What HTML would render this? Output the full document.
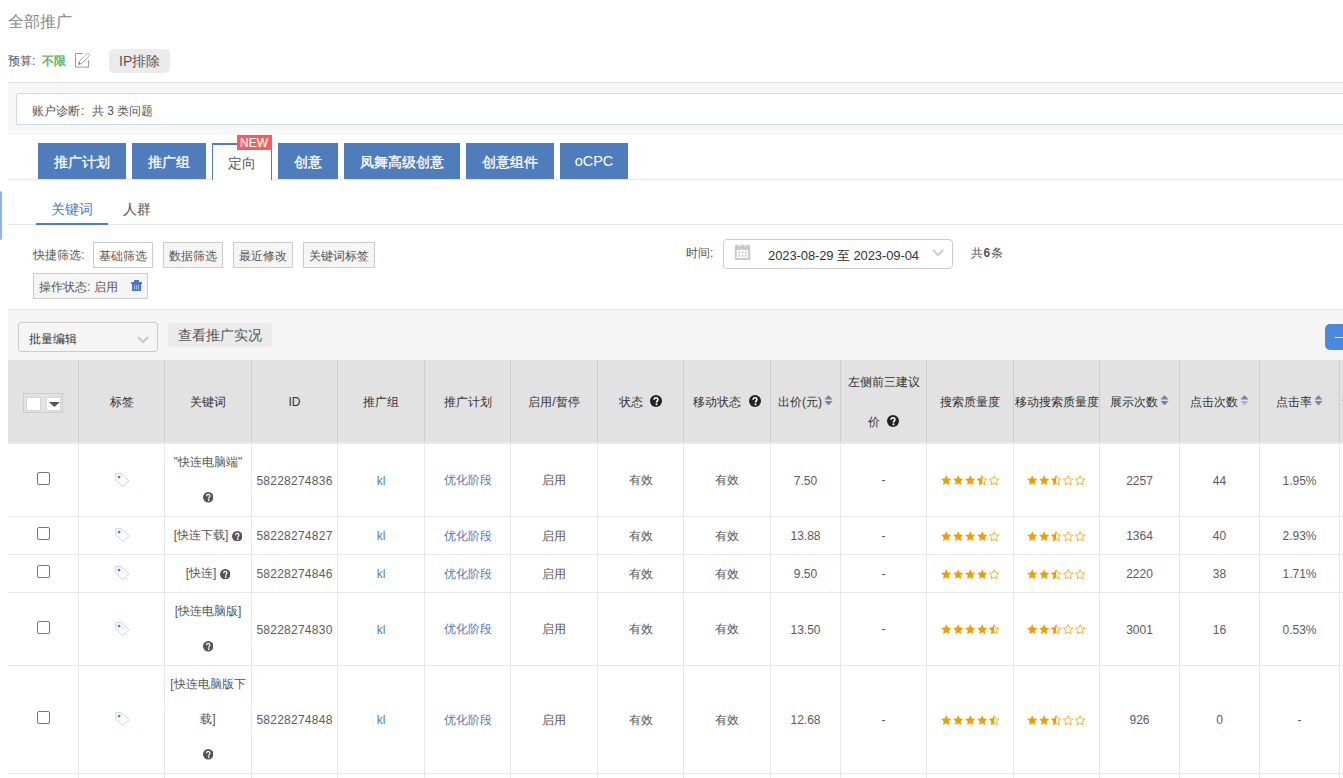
<!DOCTYPE html>
<html><head><meta charset="utf-8"><style>
html,body{margin:0;padding:0;background:#fff;width:1343px;height:778px;overflow:hidden;position:relative;font-family:"Liberation Sans", sans-serif}
.t{position:absolute;white-space:nowrap;line-height:1;}
.r{position:absolute;}
svg{display:inline-block}
</style></head><body>
<div class="t" style="left:8px;top:14px;font-size:16px;color:#888;font-weight:normal;">全部推广</div>
<div class="t" style="left:8px;top:55px;font-size:12px;color:#555;font-weight:normal;">预算:</div>
<div class="t" style="left:42px;top:55px;font-size:12px;color:#4cb050;font-weight:normal;-webkit-text-stroke:0.35px #4cb050">不限</div>
<svg class="r" style="left:74px;top:52px" width="17" height="17" viewBox="0 0 17 17"><path d="M8.7 1.5H1.5V15.1H14.5V8.3" fill="none" stroke="#999" stroke-width="1"/><path d="M4.5 12.5L5.46 9.27L13.66 0.97L15.94 3.23L7.74 11.53Z" fill="none" stroke="#a0a0a0" stroke-width="0.9" stroke-linejoin="round"/><path d="M4.4 12.6L5.1 10.1L6.9 11.9Z" fill="#777"/></svg>
<div class="r" style="left:109px;top:49px;width:61px;height:24px;background:#ebebeb;border-radius:5px"></div>
<div class="t" style="left:119px;top:54px;font-size:14px;color:#555;font-weight:normal;">IP排除</div>
<div class="r" style="left:8px;top:82px;width:1335px;height:1px;background:#dcdcdc"></div>
<div class="r" style="left:8px;top:83px;width:1335px;height:52px;background:#f7f7f7"></div>
<div class="r" style="left:16px;top:93px;width:1340px;height:32px;background:#fff;border:1px solid #c8dcef;border-radius:2px;box-sizing:border-box"></div>
<div class="t" style="left:32px;top:105px;font-size:12px;color:#555;font-weight:normal;">账户诊断<span style="display:inline-block;width:12px;padding-left:1px;box-sizing:border-box">:</span>共 3 类问题</div>
<div class="r" style="left:8px;top:179px;width:1335px;height:1px;background:#e6e6e6"></div>
<div class="r" style="left:38px;top:143px;width:88px;height:36px;background:#4f7cba"></div>
<div class="t" style="left:-118.0px;width:400px;text-align:center;top:155px;font-size:14px;color:#fff;font-weight:normal;-webkit-text-stroke:0.3px #fff">推广计划</div>
<div class="r" style="left:132px;top:143px;width:74px;height:36px;background:#4f7cba"></div>
<div class="t" style="left:-31.0px;width:400px;text-align:center;top:155px;font-size:14px;color:#fff;font-weight:normal;-webkit-text-stroke:0.3px #fff">推广组</div>
<div class="r" style="left:212px;top:143px;width:60px;height:37px;background:#fff;border:1px solid #4f7cba;border-top-width:2px;border-bottom:none;box-sizing:border-box"></div>
<div class="t" style="left:42.0px;width:400px;text-align:center;top:156px;font-size:14px;color:#555;font-weight:normal;">定向</div>
<div class="r" style="left:278px;top:143px;width:60px;height:36px;background:#4f7cba"></div>
<div class="t" style="left:108.0px;width:400px;text-align:center;top:155px;font-size:14px;color:#fff;font-weight:normal;-webkit-text-stroke:0.3px #fff">创意</div>
<div class="r" style="left:344px;top:143px;width:116px;height:36px;background:#4f7cba"></div>
<div class="t" style="left:202.0px;width:400px;text-align:center;top:155px;font-size:14px;color:#fff;font-weight:normal;-webkit-text-stroke:0.3px #fff">凤舞高级创意</div>
<div class="r" style="left:466px;top:143px;width:88px;height:36px;background:#4f7cba"></div>
<div class="t" style="left:310.0px;width:400px;text-align:center;top:155px;font-size:14px;color:#fff;font-weight:normal;-webkit-text-stroke:0.3px #fff">创意组件</div>
<div class="r" style="left:560px;top:143px;width:68px;height:36px;background:#4f7cba"></div>
<div class="t" style="left:394.0px;width:400px;text-align:center;top:154.3px;font-size:14.5px;color:#fff;font-weight:normal;">oCPC</div>
<div class="r" style="left:237px;top:135px;width:35px;height:15px;background:#f65c5c"></div>
<div class="t" style="left:240px;top:137px;font-size:12px;color:#fff;font-weight:normal;-webkit-text-stroke:0.2px #fff">NEW</div>
<div class="r" style="left:0px;top:191px;width:2px;height:49px;background:#8fb4e6;border-radius:0 2px 2px 0"></div>
<div class="r" style="left:8px;top:224px;width:1335px;height:1px;background:#e6e6e6"></div>
<div class="r" style="left:36px;top:223px;width:72px;height:2px;background:#4f7cba"></div>
<div class="t" style="left:51px;top:202px;font-size:14px;color:#4f7cba;font-weight:normal;">关键词</div>
<div class="t" style="left:123px;top:202px;font-size:14px;color:#555;font-weight:normal;">人群</div>
<div class="t" style="left:33px;top:249px;font-size:12px;color:#555;font-weight:normal;">快捷筛选:</div>
<div class="r" style="left:93px;top:242px;width:60px;height:26px;background:#fff;border:1px solid #ccc;box-sizing:border-box"></div>
<div class="t" style="left:-77.0px;width:400px;text-align:center;top:249.5px;font-size:12px;color:#555;font-weight:normal;">基础筛选</div>
<div class="r" style="left:163px;top:242px;width:60px;height:26px;background:#f5f5f5;border:1px solid #ccc;box-sizing:border-box"></div>
<div class="t" style="left:-7.0px;width:400px;text-align:center;top:249.5px;font-size:12px;color:#555;font-weight:normal;">数据筛选</div>
<div class="r" style="left:233px;top:242px;width:60px;height:26px;background:#f5f5f5;border:1px solid #ccc;box-sizing:border-box"></div>
<div class="t" style="left:63.0px;width:400px;text-align:center;top:249.5px;font-size:12px;color:#555;font-weight:normal;">最近修改</div>
<div class="r" style="left:303px;top:242px;width:72px;height:26px;background:#f5f5f5;border:1px solid #ccc;box-sizing:border-box"></div>
<div class="t" style="left:139.0px;width:400px;text-align:center;top:249.5px;font-size:12px;color:#555;font-weight:normal;">关键词标签</div>
<div class="r" style="left:33px;top:273px;width:115px;height:26px;background:#f5f5f5;border:1px solid #ccc;box-sizing:border-box"></div>
<div class="t" style="left:39px;top:280.5px;font-size:12px;color:#555;font-weight:normal;">操作状态: 启用</div>
<svg class="r" style="left:131px;top:279px" width="12" height="12" viewBox="0 0 12 12"><rect x="3" y="1" width="5" height="2" fill="#4a78c2"/><rect x="0.1" y="3" width="10.9" height="2" fill="#4a78c2"/><rect x="1" y="5" width="9.1" height="7" fill="#4a78c2"/><g fill="#a3bde6"><rect x="3" y="6" width="1" height="4.5"/><rect x="5" y="6" width="1" height="4.5"/><rect x="7" y="6" width="1" height="4.5"/></g></svg>
<div class="t" style="left:686px;top:247px;font-size:12px;color:#555;font-weight:normal;">时间:</div>
<div class="r" style="left:723px;top:239px;width:230px;height:30px;background:#fff;border:1px solid #ccc;border-radius:4px;box-sizing:border-box"></div>
<svg class="r" style="left:734px;top:244px" width="17" height="17" viewBox="0 0 17 17"><rect x="0.8" y="0.8" width="15.5" height="15.2" rx="1.6" fill="#cacaca"/><rect x="4.8" y="0.5" width="1.5" height="1.8" fill="#fff"/><rect x="10.8" y="0.5" width="1.5" height="1.8" fill="#fff"/><rect x="2.8" y="6" width="11.3" height="8" fill="#fff"/><g fill="#d6d6d6"><rect x="4" y="7.2" width="2.2" height="2.2"/><rect x="7.4" y="7.2" width="2.2" height="2.2"/><rect x="10.8" y="7.2" width="2.2" height="2.2"/><rect x="4" y="10.6" width="2.2" height="2.2"/><rect x="7.4" y="10.6" width="2.2" height="2.2"/><rect x="10.8" y="10.6" width="2.2" height="2.2"/></g></svg>
<div class="t" style="left:768px;top:248.5px;font-size:13px;color:#333;font-weight:normal;letter-spacing:-0.1px">2023-08-29 至 2023-09-04</div>
<svg class="r" style="left:932px;top:249px" width="12" height="8" viewBox="0 0 12 8"><path d="M1 1L6 6L11 1" fill="none" stroke="#ccc" stroke-width="2"/></svg>
<div class="t" style="left:971px;top:246.5px;font-size:12px;color:#555;font-weight:normal;">共<b style="color:#555;padding:0 1px 0 0.5px">6</b>条</div>
<div class="r" style="left:8px;top:309px;width:1335px;height:51px;background:#f5f5f5;border-top:1px solid #e8e8e8;box-sizing:border-box"></div>
<div class="r" style="left:18px;top:322px;width:140px;height:30px;background:#f5f5f5;border:1px solid #ccc;border-radius:3px;box-sizing:border-box"></div>
<div class="t" style="left:29px;top:333px;font-size:12px;color:#333;font-weight:normal;">批量编辑</div>
<svg class="r" style="left:136.5px;top:335.5px" width="12" height="8" viewBox="0 0 12 8"><path d="M1 1L6 6L11 1" fill="none" stroke="#c8c8c8" stroke-width="2.2"/></svg>
<div class="r" style="left:168px;top:323px;width:104px;height:24px;background:#ebebeb;border-radius:4px"></div>
<div class="t" style="left:178px;top:328px;font-size:14px;color:#555;font-weight:normal;">查看推广实况</div>
<div class="r" style="left:1325px;top:324px;width:40px;height:26px;background:#4a89dc;border-radius:5px"></div>
<div class="r" style="left:1335px;top:336.5px;width:20px;height:1.6px;background:#fff"></div>
<div class="r" style="left:8px;top:360px;width:1335px;height:82px;background:#e2e2e2"></div>
<div class="r" style="left:8px;top:442px;width:1335px;height:2px;background:#e9e9e9"></div>
<div class="r" style="left:78px;top:360px;width:1px;height:82px;background:#ccc"></div>
<div class="r" style="left:78px;top:444px;width:1px;height:334px;background:#e8e8e8"></div>
<div class="r" style="left:164px;top:360px;width:1px;height:82px;background:#ccc"></div>
<div class="r" style="left:164px;top:444px;width:1px;height:334px;background:#e8e8e8"></div>
<div class="r" style="left:251px;top:360px;width:1px;height:82px;background:#ccc"></div>
<div class="r" style="left:251px;top:444px;width:1px;height:334px;background:#e8e8e8"></div>
<div class="r" style="left:337px;top:360px;width:1px;height:82px;background:#ccc"></div>
<div class="r" style="left:337px;top:444px;width:1px;height:334px;background:#e8e8e8"></div>
<div class="r" style="left:424px;top:360px;width:1px;height:82px;background:#ccc"></div>
<div class="r" style="left:424px;top:444px;width:1px;height:334px;background:#e8e8e8"></div>
<div class="r" style="left:510px;top:360px;width:1px;height:82px;background:#ccc"></div>
<div class="r" style="left:510px;top:444px;width:1px;height:334px;background:#e8e8e8"></div>
<div class="r" style="left:597px;top:360px;width:1px;height:82px;background:#ccc"></div>
<div class="r" style="left:597px;top:444px;width:1px;height:334px;background:#e8e8e8"></div>
<div class="r" style="left:683px;top:360px;width:1px;height:82px;background:#ccc"></div>
<div class="r" style="left:683px;top:444px;width:1px;height:334px;background:#e8e8e8"></div>
<div class="r" style="left:770px;top:360px;width:1px;height:82px;background:#ccc"></div>
<div class="r" style="left:770px;top:444px;width:1px;height:334px;background:#e8e8e8"></div>
<div class="r" style="left:840px;top:360px;width:1px;height:82px;background:#ccc"></div>
<div class="r" style="left:840px;top:444px;width:1px;height:334px;background:#e8e8e8"></div>
<div class="r" style="left:926px;top:360px;width:1px;height:82px;background:#ccc"></div>
<div class="r" style="left:926px;top:444px;width:1px;height:334px;background:#e8e8e8"></div>
<div class="r" style="left:1013px;top:360px;width:1px;height:82px;background:#ccc"></div>
<div class="r" style="left:1013px;top:444px;width:1px;height:334px;background:#e8e8e8"></div>
<div class="r" style="left:1099px;top:360px;width:1px;height:82px;background:#ccc"></div>
<div class="r" style="left:1099px;top:444px;width:1px;height:334px;background:#e8e8e8"></div>
<div class="r" style="left:1179px;top:360px;width:1px;height:82px;background:#ccc"></div>
<div class="r" style="left:1179px;top:444px;width:1px;height:334px;background:#e8e8e8"></div>
<div class="r" style="left:1259px;top:360px;width:1px;height:82px;background:#ccc"></div>
<div class="r" style="left:1259px;top:444px;width:1px;height:334px;background:#e8e8e8"></div>
<div class="r" style="left:1339px;top:360px;width:1px;height:82px;background:#ccc"></div>
<div class="r" style="left:1339px;top:444px;width:1px;height:334px;background:#e8e8e8"></div>
<div class="r" style="left:8px;top:516px;width:1335px;height:1px;background:#e8e8e8"></div>
<div class="r" style="left:8px;top:554px;width:1335px;height:1px;background:#e8e8e8"></div>
<div class="r" style="left:8px;top:592px;width:1335px;height:1px;background:#e8e8e8"></div>
<div class="r" style="left:8px;top:665px;width:1335px;height:1px;background:#e8e8e8"></div>
<div class="r" style="left:8px;top:773px;width:1335px;height:1px;background:#e8e8e8"></div>
<div class="r" style="left:23px;top:393px;width:40px;height:20px;border:1px solid #ccc;box-sizing:border-box"></div>
<div class="r" style="left:26px;top:397px;width:15px;height:14px;background:#fff;border:1px solid #d6d6d6;box-sizing:border-box"></div>
<div class="r" style="left:46px;top:397px;width:15px;height:14px;background:#fff;border:1px solid #d6d6d6;box-sizing:border-box"></div>
<svg class="r" style="left:48px;top:402px" width="13" height="5" viewBox="0 0 13 5"><path d="M0.9 0H11.9L6.4 5Z" fill="#555"/></svg>
<div class="t" style="left:-78.5px;width:400px;text-align:center;top:395.6px;font-size:12px;color:#333;font-weight:normal;">标签</div>
<div class="t" style="left:8.0px;width:400px;text-align:center;top:395.6px;font-size:12px;color:#333;font-weight:normal;">关键词</div>
<div class="t" style="left:94.5px;width:400px;text-align:center;top:395.6px;font-size:12px;color:#333;font-weight:normal;">ID</div>
<div class="t" style="left:181.0px;width:400px;text-align:center;top:395.6px;font-size:12px;color:#333;font-weight:normal;">推广组</div>
<div class="t" style="left:267.5px;width:400px;text-align:center;top:395.6px;font-size:12px;color:#333;font-weight:normal;">推广计划</div>
<div class="t" style="left:354.0px;width:400px;text-align:center;top:395.6px;font-size:12px;color:#333;font-weight:normal;">启用/暂停</div>
<div class="t" style="left:440.5px;width:400px;text-align:center;top:395.6px;font-size:12px;color:#333;font-weight:normal;">状态 &nbsp;<svg width="12" height="12" viewBox="0 0 12 12" style="vertical-align:-2.7px;margin-left:1px;position:relative;top:-1px"><circle cx="6" cy="6" r="6" fill="#222"/><path d="M4.1 4.8C4.1 3.5 5 2.7 6 2.7C7.1 2.7 7.9 3.5 7.9 4.5C7.9 5.8 6.5 6 6.5 7.6" fill="none" stroke="#fff" stroke-width="1.6"/><rect x="5.6" y="8.4" width="1.8" height="1.8" fill="#fff"/></svg></div>
<div class="t" style="left:527.0px;width:400px;text-align:center;top:395.6px;font-size:12px;color:#333;font-weight:normal;">移动状态 &nbsp;<svg width="12" height="12" viewBox="0 0 12 12" style="vertical-align:-2.7px;margin-left:1px;position:relative;top:-1px"><circle cx="6" cy="6" r="6" fill="#222"/><path d="M4.1 4.8C4.1 3.5 5 2.7 6 2.7C7.1 2.7 7.9 3.5 7.9 4.5C7.9 5.8 6.5 6 6.5 7.6" fill="none" stroke="#fff" stroke-width="1.6"/><rect x="5.6" y="8.4" width="1.8" height="1.8" fill="#fff"/></svg></div>
<div class="t" style="left:605.5px;width:400px;text-align:center;top:395.6px;font-size:12px;color:#333;font-weight:normal;">出价(元)<svg width="9" height="11" viewBox="0 0 9 11" style="vertical-align:-2px;margin-left:2px;position:relative;top:-2px"><path d="M0.5 4.5L4.5 0L8.5 4.5Z" fill="#6f87a8"/><path d="M0.5 6L4.5 10.5L8.5 6Z" fill="#6f87a8"/></svg></div>
<div class="t" style="left:770.0px;width:400px;text-align:center;top:395.6px;font-size:12px;color:#333;font-weight:normal;">搜索质量度</div>
<div class="t" style="left:856.5px;width:400px;text-align:center;top:395.6px;font-size:12px;color:#333;font-weight:normal;">移动搜索质量度</div>
<div class="t" style="left:939.5px;width:400px;text-align:center;top:395.6px;font-size:12px;color:#333;font-weight:normal;">展示次数<svg width="9" height="11" viewBox="0 0 9 11" style="vertical-align:-2px;margin-left:2px;position:relative;top:-2px"><path d="M0.5 4.5L4.5 0L8.5 4.5Z" fill="#6f87a8"/><path d="M0.5 6L4.5 10.5L8.5 6Z" fill="#6f87a8"/></svg></div>
<div class="t" style="left:1019.5px;width:400px;text-align:center;top:395.6px;font-size:12px;color:#333;font-weight:normal;">点击次数<svg width="9" height="11" viewBox="0 0 9 11" style="vertical-align:-2px;margin-left:2px;position:relative;top:-2px"><path d="M0.5 4.5L4.5 0L8.5 4.5Z" fill="#6f87a8"/><path d="M0.5 6L4.5 10.5L8.5 6Z" fill="#a9b7ca"/></svg></div>
<div class="t" style="left:1099.5px;width:400px;text-align:center;top:395.6px;font-size:12px;color:#333;font-weight:normal;">点击率<svg width="9" height="11" viewBox="0 0 9 11" style="vertical-align:-2px;margin-left:2px;position:relative;top:-2px"><path d="M0.5 4.5L4.5 0L8.5 4.5Z" fill="#6f87a8"/><path d="M0.5 6L4.5 10.5L8.5 6Z" fill="#6f87a8"/></svg></div>
<div class="t" style="left:683.5px;width:400px;text-align:center;top:375.6px;font-size:12px;color:#333;font-weight:normal;">左侧前三建议</div>
<div class="t" style="left:683.5px;width:400px;text-align:center;top:415.6px;font-size:12px;color:#333;font-weight:normal;">价 &nbsp;<svg width="12" height="12" viewBox="0 0 12 12" style="vertical-align:-2.7px;margin-left:1px;position:relative;top:-1px"><circle cx="6" cy="6" r="6" fill="#222"/><path d="M4.1 4.8C4.1 3.5 5 2.7 6 2.7C7.1 2.7 7.9 3.5 7.9 4.5C7.9 5.8 6.5 6 6.5 7.6" fill="none" stroke="#fff" stroke-width="1.6"/><rect x="5.6" y="8.4" width="1.8" height="1.8" fill="#fff"/></svg></div>
<div class="t" style="left:1342px;top:395px;font-size:12px;color:#333;font-weight:normal;">千</div>
<div class="r" style="left:37px;top:471.5px;width:13px;height:13px;border:1px solid #767676;border-radius:2px;box-sizing:border-box;background:#fff"></div>
<div class="r" style="left:115.0px;top:472.5px;width:15px;height:15px"><svg width="15" height="15" viewBox="0 0 15 15"><path d="M0.7 0.7H6.8L13.9 7.8L7.8 13.9L0.7 6.8Z" fill="none" stroke="#b8d4fc" stroke-width="1"/><circle cx="4.1" cy="4.1" r="1.4" fill="#4a7cc4"/></svg></div>
<div class="t" style="left:8.0px;width:400px;text-align:center;top:455.5px;font-size:12px;color:#555;font-weight:normal;">"快连电脑端"</div>
<div class="t" style="left:8.0px;width:400px;text-align:center;top:491.5px;font-size:12px;color:#555;font-weight:normal;"><svg width="10.5" height="10.5" viewBox="0 0 12 12" style="vertical-align:-1px;margin-left:0px;position:relative;top:0px"><circle cx="6" cy="6" r="6" fill="#555"/><path d="M4.1 4.8C4.1 3.5 5 2.7 6 2.7C7.1 2.7 7.9 3.5 7.9 4.5C7.9 5.8 6.5 6 6.5 7.6" fill="none" stroke="#fff" stroke-width="1.4"/><rect x="5.6" y="8.4" width="1.8" height="1.8" fill="#fff"/></svg></div>
<div class="t" style="left:94.5px;width:400px;text-align:center;top:475px;font-size:12px;color:#5c5c5c;font-weight:normal;letter-spacing:0.25px">58228274836</div>
<div class="t" style="left:181.0px;width:400px;text-align:center;top:475px;font-size:12px;color:#4f7cba;font-weight:normal;">kl</div>
<div class="t" style="left:267.5px;width:400px;text-align:center;top:474.0px;font-size:12px;color:#4f7cba;font-weight:normal;">优化阶段</div>
<div class="t" style="left:354.0px;width:400px;text-align:center;top:474.0px;font-size:12px;color:#555;font-weight:normal;">启用</div>
<div class="t" style="left:440.5px;width:400px;text-align:center;top:474.0px;font-size:12px;color:#555;font-weight:normal;">有效</div>
<div class="t" style="left:527.0px;width:400px;text-align:center;top:474.0px;font-size:12px;color:#555;font-weight:normal;">有效</div>
<div class="t" style="left:605.5px;width:400px;text-align:center;top:475px;font-size:12px;color:#5c5c5c;font-weight:normal;">7.50</div>
<div class="t" style="left:683.5px;width:400px;text-align:center;top:474.0px;font-size:12px;color:#555;font-weight:normal;">-</div>
<div class="r" style="left:941px;top:475.0px;width:58px;height:11px;line-height:0"><svg width="58" height="11" viewBox="0 0 58 11" style="overflow:visible"><g transform="translate(0.2,0.3)"><path d="M5.00 0.05L6.50 3.29L10.04 3.71L7.43 6.14L8.12 9.64L5.00 7.90L1.88 9.64L2.57 6.14L-0.04 3.71L3.50 3.29Z" fill="#ef9d00"/></g><g transform="translate(12.2,0.3)"><path d="M5.00 0.05L6.50 3.29L10.04 3.71L7.43 6.14L8.12 9.64L5.00 7.90L1.88 9.64L2.57 6.14L-0.04 3.71L3.50 3.29Z" fill="#ef9d00"/></g><g transform="translate(24.2,0.3)"><path d="M5.00 0.05L6.50 3.29L10.04 3.71L7.43 6.14L8.12 9.64L5.00 7.90L1.88 9.64L2.57 6.14L-0.04 3.71L3.50 3.29Z" fill="#ef9d00"/></g><g transform="translate(36.2,0.3)"><path d="M5.00 0.40L6.44 3.47L9.80 3.89L7.33 6.21L7.97 9.54L5.00 7.90L2.03 9.54L2.67 6.21L0.20 3.89L3.56 3.47Z" fill="none" stroke="#ef9d00" stroke-width="0.8"/><clipPath id="hc"><rect x="0" y="0" width="5" height="11"/></clipPath><path d="M5.00 0.05L6.50 3.29L10.04 3.71L7.43 6.14L8.12 9.64L5.00 7.90L1.88 9.64L2.57 6.14L-0.04 3.71L3.50 3.29Z" fill="#ef9d00" clip-path="url(#hc)"/></g><g transform="translate(48.2,0.3)"><path d="M5.00 0.40L6.44 3.47L9.80 3.89L7.33 6.21L7.97 9.54L5.00 7.90L2.03 9.54L2.67 6.21L0.20 3.89L3.56 3.47Z" fill="none" stroke="#ef9d00" stroke-width="0.8" stroke-linejoin="miter"/></g></svg></div>
<div class="r" style="left:1027px;top:475.0px;width:58px;height:11px;line-height:0"><svg width="58" height="11" viewBox="0 0 58 11" style="overflow:visible"><g transform="translate(0.2,0.3)"><path d="M5.00 0.05L6.50 3.29L10.04 3.71L7.43 6.14L8.12 9.64L5.00 7.90L1.88 9.64L2.57 6.14L-0.04 3.71L3.50 3.29Z" fill="#ef9d00"/></g><g transform="translate(12.2,0.3)"><path d="M5.00 0.05L6.50 3.29L10.04 3.71L7.43 6.14L8.12 9.64L5.00 7.90L1.88 9.64L2.57 6.14L-0.04 3.71L3.50 3.29Z" fill="#ef9d00"/></g><g transform="translate(24.2,0.3)"><path d="M5.00 0.40L6.44 3.47L9.80 3.89L7.33 6.21L7.97 9.54L5.00 7.90L2.03 9.54L2.67 6.21L0.20 3.89L3.56 3.47Z" fill="none" stroke="#ef9d00" stroke-width="0.8"/><clipPath id="hc"><rect x="0" y="0" width="5" height="11"/></clipPath><path d="M5.00 0.05L6.50 3.29L10.04 3.71L7.43 6.14L8.12 9.64L5.00 7.90L1.88 9.64L2.57 6.14L-0.04 3.71L3.50 3.29Z" fill="#ef9d00" clip-path="url(#hc)"/></g><g transform="translate(36.2,0.3)"><path d="M5.00 0.40L6.44 3.47L9.80 3.89L7.33 6.21L7.97 9.54L5.00 7.90L2.03 9.54L2.67 6.21L0.20 3.89L3.56 3.47Z" fill="none" stroke="#ef9d00" stroke-width="0.8" stroke-linejoin="miter"/></g><g transform="translate(48.2,0.3)"><path d="M5.00 0.40L6.44 3.47L9.80 3.89L7.33 6.21L7.97 9.54L5.00 7.90L2.03 9.54L2.67 6.21L0.20 3.89L3.56 3.47Z" fill="none" stroke="#ef9d00" stroke-width="0.8" stroke-linejoin="miter"/></g></svg></div>
<div class="t" style="left:939.5px;width:400px;text-align:center;top:475px;font-size:12px;color:#5c5c5c;font-weight:normal;">2257</div>
<div class="t" style="left:1019.5px;width:400px;text-align:center;top:475px;font-size:12px;color:#5c5c5c;font-weight:normal;">44</div>
<div class="t" style="left:1099.5px;width:400px;text-align:center;top:475px;font-size:12px;color:#5c5c5c;font-weight:normal;">1.95%</div>
<div class="r" style="left:37px;top:527.0px;width:13px;height:13px;border:1px solid #767676;border-radius:2px;box-sizing:border-box;background:#fff"></div>
<div class="r" style="left:115.0px;top:528.0px;width:15px;height:15px"><svg width="15" height="15" viewBox="0 0 15 15"><path d="M0.7 0.7H6.8L13.9 7.8L7.8 13.9L0.7 6.8Z" fill="none" stroke="#b8d4fc" stroke-width="1"/><circle cx="4.1" cy="4.1" r="1.4" fill="#4a7cc4"/></svg></div>
<div class="t" style="left:8.0px;width:400px;text-align:center;top:528.5px;font-size:12px;color:#555;font-weight:normal;">[快连下载] <svg width="10.5" height="10.5" viewBox="0 0 12 12" style="vertical-align:-2.6px;margin-left:0px;position:relative;top:0px"><circle cx="6" cy="6" r="6" fill="#555"/><path d="M4.1 4.8C4.1 3.5 5 2.7 6 2.7C7.1 2.7 7.9 3.5 7.9 4.5C7.9 5.8 6.5 6 6.5 7.6" fill="none" stroke="#fff" stroke-width="1.4"/><rect x="5.6" y="8.4" width="1.8" height="1.8" fill="#fff"/></svg></div>
<div class="t" style="left:94.5px;width:400px;text-align:center;top:530px;font-size:12px;color:#5c5c5c;font-weight:normal;letter-spacing:0.25px">58228274827</div>
<div class="t" style="left:181.0px;width:400px;text-align:center;top:530px;font-size:12px;color:#4f7cba;font-weight:normal;">kl</div>
<div class="t" style="left:267.5px;width:400px;text-align:center;top:529.5px;font-size:12px;color:#4f7cba;font-weight:normal;">优化阶段</div>
<div class="t" style="left:354.0px;width:400px;text-align:center;top:529.5px;font-size:12px;color:#555;font-weight:normal;">启用</div>
<div class="t" style="left:440.5px;width:400px;text-align:center;top:529.5px;font-size:12px;color:#555;font-weight:normal;">有效</div>
<div class="t" style="left:527.0px;width:400px;text-align:center;top:529.5px;font-size:12px;color:#555;font-weight:normal;">有效</div>
<div class="t" style="left:605.5px;width:400px;text-align:center;top:530px;font-size:12px;color:#5c5c5c;font-weight:normal;">13.88</div>
<div class="t" style="left:683.5px;width:400px;text-align:center;top:529.5px;font-size:12px;color:#555;font-weight:normal;">-</div>
<div class="r" style="left:941px;top:530.5px;width:58px;height:11px;line-height:0"><svg width="58" height="11" viewBox="0 0 58 11" style="overflow:visible"><g transform="translate(0.2,0.3)"><path d="M5.00 0.05L6.50 3.29L10.04 3.71L7.43 6.14L8.12 9.64L5.00 7.90L1.88 9.64L2.57 6.14L-0.04 3.71L3.50 3.29Z" fill="#ef9d00"/></g><g transform="translate(12.2,0.3)"><path d="M5.00 0.05L6.50 3.29L10.04 3.71L7.43 6.14L8.12 9.64L5.00 7.90L1.88 9.64L2.57 6.14L-0.04 3.71L3.50 3.29Z" fill="#ef9d00"/></g><g transform="translate(24.2,0.3)"><path d="M5.00 0.05L6.50 3.29L10.04 3.71L7.43 6.14L8.12 9.64L5.00 7.90L1.88 9.64L2.57 6.14L-0.04 3.71L3.50 3.29Z" fill="#ef9d00"/></g><g transform="translate(36.2,0.3)"><path d="M5.00 0.05L6.50 3.29L10.04 3.71L7.43 6.14L8.12 9.64L5.00 7.90L1.88 9.64L2.57 6.14L-0.04 3.71L3.50 3.29Z" fill="#ef9d00"/></g><g transform="translate(48.2,0.3)"><path d="M5.00 0.40L6.44 3.47L9.80 3.89L7.33 6.21L7.97 9.54L5.00 7.90L2.03 9.54L2.67 6.21L0.20 3.89L3.56 3.47Z" fill="none" stroke="#ef9d00" stroke-width="0.8" stroke-linejoin="miter"/></g></svg></div>
<div class="r" style="left:1027px;top:530.5px;width:58px;height:11px;line-height:0"><svg width="58" height="11" viewBox="0 0 58 11" style="overflow:visible"><g transform="translate(0.2,0.3)"><path d="M5.00 0.05L6.50 3.29L10.04 3.71L7.43 6.14L8.12 9.64L5.00 7.90L1.88 9.64L2.57 6.14L-0.04 3.71L3.50 3.29Z" fill="#ef9d00"/></g><g transform="translate(12.2,0.3)"><path d="M5.00 0.05L6.50 3.29L10.04 3.71L7.43 6.14L8.12 9.64L5.00 7.90L1.88 9.64L2.57 6.14L-0.04 3.71L3.50 3.29Z" fill="#ef9d00"/></g><g transform="translate(24.2,0.3)"><path d="M5.00 0.40L6.44 3.47L9.80 3.89L7.33 6.21L7.97 9.54L5.00 7.90L2.03 9.54L2.67 6.21L0.20 3.89L3.56 3.47Z" fill="none" stroke="#ef9d00" stroke-width="0.8"/><clipPath id="hc"><rect x="0" y="0" width="5" height="11"/></clipPath><path d="M5.00 0.05L6.50 3.29L10.04 3.71L7.43 6.14L8.12 9.64L5.00 7.90L1.88 9.64L2.57 6.14L-0.04 3.71L3.50 3.29Z" fill="#ef9d00" clip-path="url(#hc)"/></g><g transform="translate(36.2,0.3)"><path d="M5.00 0.40L6.44 3.47L9.80 3.89L7.33 6.21L7.97 9.54L5.00 7.90L2.03 9.54L2.67 6.21L0.20 3.89L3.56 3.47Z" fill="none" stroke="#ef9d00" stroke-width="0.8" stroke-linejoin="miter"/></g><g transform="translate(48.2,0.3)"><path d="M5.00 0.40L6.44 3.47L9.80 3.89L7.33 6.21L7.97 9.54L5.00 7.90L2.03 9.54L2.67 6.21L0.20 3.89L3.56 3.47Z" fill="none" stroke="#ef9d00" stroke-width="0.8" stroke-linejoin="miter"/></g></svg></div>
<div class="t" style="left:939.5px;width:400px;text-align:center;top:530px;font-size:12px;color:#5c5c5c;font-weight:normal;">1364</div>
<div class="t" style="left:1019.5px;width:400px;text-align:center;top:530px;font-size:12px;color:#5c5c5c;font-weight:normal;">40</div>
<div class="t" style="left:1099.5px;width:400px;text-align:center;top:530px;font-size:12px;color:#5c5c5c;font-weight:normal;">2.93%</div>
<div class="r" style="left:37px;top:565.0px;width:13px;height:13px;border:1px solid #767676;border-radius:2px;box-sizing:border-box;background:#fff"></div>
<div class="r" style="left:115.0px;top:566.0px;width:15px;height:15px"><svg width="15" height="15" viewBox="0 0 15 15"><path d="M0.7 0.7H6.8L13.9 7.8L7.8 13.9L0.7 6.8Z" fill="none" stroke="#b8d4fc" stroke-width="1"/><circle cx="4.1" cy="4.1" r="1.4" fill="#4a7cc4"/></svg></div>
<div class="t" style="left:8.0px;width:400px;text-align:center;top:566.5px;font-size:12px;color:#555;font-weight:normal;">[快连] <svg width="10.5" height="10.5" viewBox="0 0 12 12" style="vertical-align:-2.6px;margin-left:0px;position:relative;top:0px"><circle cx="6" cy="6" r="6" fill="#555"/><path d="M4.1 4.8C4.1 3.5 5 2.7 6 2.7C7.1 2.7 7.9 3.5 7.9 4.5C7.9 5.8 6.5 6 6.5 7.6" fill="none" stroke="#fff" stroke-width="1.4"/><rect x="5.6" y="8.4" width="1.8" height="1.8" fill="#fff"/></svg></div>
<div class="t" style="left:94.5px;width:400px;text-align:center;top:568px;font-size:12px;color:#5c5c5c;font-weight:normal;letter-spacing:0.25px">58228274846</div>
<div class="t" style="left:181.0px;width:400px;text-align:center;top:568px;font-size:12px;color:#4f7cba;font-weight:normal;">kl</div>
<div class="t" style="left:267.5px;width:400px;text-align:center;top:567.5px;font-size:12px;color:#4f7cba;font-weight:normal;">优化阶段</div>
<div class="t" style="left:354.0px;width:400px;text-align:center;top:567.5px;font-size:12px;color:#555;font-weight:normal;">启用</div>
<div class="t" style="left:440.5px;width:400px;text-align:center;top:567.5px;font-size:12px;color:#555;font-weight:normal;">有效</div>
<div class="t" style="left:527.0px;width:400px;text-align:center;top:567.5px;font-size:12px;color:#555;font-weight:normal;">有效</div>
<div class="t" style="left:605.5px;width:400px;text-align:center;top:568px;font-size:12px;color:#5c5c5c;font-weight:normal;">9.50</div>
<div class="t" style="left:683.5px;width:400px;text-align:center;top:567.5px;font-size:12px;color:#555;font-weight:normal;">-</div>
<div class="r" style="left:941px;top:568.5px;width:58px;height:11px;line-height:0"><svg width="58" height="11" viewBox="0 0 58 11" style="overflow:visible"><g transform="translate(0.2,0.3)"><path d="M5.00 0.05L6.50 3.29L10.04 3.71L7.43 6.14L8.12 9.64L5.00 7.90L1.88 9.64L2.57 6.14L-0.04 3.71L3.50 3.29Z" fill="#ef9d00"/></g><g transform="translate(12.2,0.3)"><path d="M5.00 0.05L6.50 3.29L10.04 3.71L7.43 6.14L8.12 9.64L5.00 7.90L1.88 9.64L2.57 6.14L-0.04 3.71L3.50 3.29Z" fill="#ef9d00"/></g><g transform="translate(24.2,0.3)"><path d="M5.00 0.05L6.50 3.29L10.04 3.71L7.43 6.14L8.12 9.64L5.00 7.90L1.88 9.64L2.57 6.14L-0.04 3.71L3.50 3.29Z" fill="#ef9d00"/></g><g transform="translate(36.2,0.3)"><path d="M5.00 0.05L6.50 3.29L10.04 3.71L7.43 6.14L8.12 9.64L5.00 7.90L1.88 9.64L2.57 6.14L-0.04 3.71L3.50 3.29Z" fill="#ef9d00"/></g><g transform="translate(48.2,0.3)"><path d="M5.00 0.40L6.44 3.47L9.80 3.89L7.33 6.21L7.97 9.54L5.00 7.90L2.03 9.54L2.67 6.21L0.20 3.89L3.56 3.47Z" fill="none" stroke="#ef9d00" stroke-width="0.8" stroke-linejoin="miter"/></g></svg></div>
<div class="r" style="left:1027px;top:568.5px;width:58px;height:11px;line-height:0"><svg width="58" height="11" viewBox="0 0 58 11" style="overflow:visible"><g transform="translate(0.2,0.3)"><path d="M5.00 0.05L6.50 3.29L10.04 3.71L7.43 6.14L8.12 9.64L5.00 7.90L1.88 9.64L2.57 6.14L-0.04 3.71L3.50 3.29Z" fill="#ef9d00"/></g><g transform="translate(12.2,0.3)"><path d="M5.00 0.05L6.50 3.29L10.04 3.71L7.43 6.14L8.12 9.64L5.00 7.90L1.88 9.64L2.57 6.14L-0.04 3.71L3.50 3.29Z" fill="#ef9d00"/></g><g transform="translate(24.2,0.3)"><path d="M5.00 0.40L6.44 3.47L9.80 3.89L7.33 6.21L7.97 9.54L5.00 7.90L2.03 9.54L2.67 6.21L0.20 3.89L3.56 3.47Z" fill="none" stroke="#ef9d00" stroke-width="0.8"/><clipPath id="hc"><rect x="0" y="0" width="5" height="11"/></clipPath><path d="M5.00 0.05L6.50 3.29L10.04 3.71L7.43 6.14L8.12 9.64L5.00 7.90L1.88 9.64L2.57 6.14L-0.04 3.71L3.50 3.29Z" fill="#ef9d00" clip-path="url(#hc)"/></g><g transform="translate(36.2,0.3)"><path d="M5.00 0.40L6.44 3.47L9.80 3.89L7.33 6.21L7.97 9.54L5.00 7.90L2.03 9.54L2.67 6.21L0.20 3.89L3.56 3.47Z" fill="none" stroke="#ef9d00" stroke-width="0.8" stroke-linejoin="miter"/></g><g transform="translate(48.2,0.3)"><path d="M5.00 0.40L6.44 3.47L9.80 3.89L7.33 6.21L7.97 9.54L5.00 7.90L2.03 9.54L2.67 6.21L0.20 3.89L3.56 3.47Z" fill="none" stroke="#ef9d00" stroke-width="0.8" stroke-linejoin="miter"/></g></svg></div>
<div class="t" style="left:939.5px;width:400px;text-align:center;top:568px;font-size:12px;color:#5c5c5c;font-weight:normal;">2220</div>
<div class="t" style="left:1019.5px;width:400px;text-align:center;top:568px;font-size:12px;color:#5c5c5c;font-weight:normal;">38</div>
<div class="t" style="left:1099.5px;width:400px;text-align:center;top:568px;font-size:12px;color:#5c5c5c;font-weight:normal;">1.71%</div>
<div class="r" style="left:37px;top:620.5px;width:13px;height:13px;border:1px solid #767676;border-radius:2px;box-sizing:border-box;background:#fff"></div>
<div class="r" style="left:115.0px;top:621.5px;width:15px;height:15px"><svg width="15" height="15" viewBox="0 0 15 15"><path d="M0.7 0.7H6.8L13.9 7.8L7.8 13.9L0.7 6.8Z" fill="none" stroke="#b8d4fc" stroke-width="1"/><circle cx="4.1" cy="4.1" r="1.4" fill="#4a7cc4"/></svg></div>
<div class="t" style="left:8.0px;width:400px;text-align:center;top:604.5px;font-size:12px;color:#555;font-weight:normal;">[快连电脑版]</div>
<div class="t" style="left:8.0px;width:400px;text-align:center;top:640.5px;font-size:12px;color:#555;font-weight:normal;"><svg width="10.5" height="10.5" viewBox="0 0 12 12" style="vertical-align:-1px;margin-left:0px;position:relative;top:0px"><circle cx="6" cy="6" r="6" fill="#555"/><path d="M4.1 4.8C4.1 3.5 5 2.7 6 2.7C7.1 2.7 7.9 3.5 7.9 4.5C7.9 5.8 6.5 6 6.5 7.6" fill="none" stroke="#fff" stroke-width="1.4"/><rect x="5.6" y="8.4" width="1.8" height="1.8" fill="#fff"/></svg></div>
<div class="t" style="left:94.5px;width:400px;text-align:center;top:624px;font-size:12px;color:#5c5c5c;font-weight:normal;letter-spacing:0.25px">58228274830</div>
<div class="t" style="left:181.0px;width:400px;text-align:center;top:624px;font-size:12px;color:#4f7cba;font-weight:normal;">kl</div>
<div class="t" style="left:267.5px;width:400px;text-align:center;top:623.0px;font-size:12px;color:#4f7cba;font-weight:normal;">优化阶段</div>
<div class="t" style="left:354.0px;width:400px;text-align:center;top:623.0px;font-size:12px;color:#555;font-weight:normal;">启用</div>
<div class="t" style="left:440.5px;width:400px;text-align:center;top:623.0px;font-size:12px;color:#555;font-weight:normal;">有效</div>
<div class="t" style="left:527.0px;width:400px;text-align:center;top:623.0px;font-size:12px;color:#555;font-weight:normal;">有效</div>
<div class="t" style="left:605.5px;width:400px;text-align:center;top:624px;font-size:12px;color:#5c5c5c;font-weight:normal;">13.50</div>
<div class="t" style="left:683.5px;width:400px;text-align:center;top:623.0px;font-size:12px;color:#555;font-weight:normal;">-</div>
<div class="r" style="left:941px;top:624.0px;width:58px;height:11px;line-height:0"><svg width="58" height="11" viewBox="0 0 58 11" style="overflow:visible"><g transform="translate(0.2,0.3)"><path d="M5.00 0.05L6.50 3.29L10.04 3.71L7.43 6.14L8.12 9.64L5.00 7.90L1.88 9.64L2.57 6.14L-0.04 3.71L3.50 3.29Z" fill="#ef9d00"/></g><g transform="translate(12.2,0.3)"><path d="M5.00 0.05L6.50 3.29L10.04 3.71L7.43 6.14L8.12 9.64L5.00 7.90L1.88 9.64L2.57 6.14L-0.04 3.71L3.50 3.29Z" fill="#ef9d00"/></g><g transform="translate(24.2,0.3)"><path d="M5.00 0.05L6.50 3.29L10.04 3.71L7.43 6.14L8.12 9.64L5.00 7.90L1.88 9.64L2.57 6.14L-0.04 3.71L3.50 3.29Z" fill="#ef9d00"/></g><g transform="translate(36.2,0.3)"><path d="M5.00 0.05L6.50 3.29L10.04 3.71L7.43 6.14L8.12 9.64L5.00 7.90L1.88 9.64L2.57 6.14L-0.04 3.71L3.50 3.29Z" fill="#ef9d00"/></g><g transform="translate(48.2,0.3)"><path d="M5.00 0.40L6.44 3.47L9.80 3.89L7.33 6.21L7.97 9.54L5.00 7.90L2.03 9.54L2.67 6.21L0.20 3.89L3.56 3.47Z" fill="none" stroke="#ef9d00" stroke-width="0.8"/><clipPath id="hc"><rect x="0" y="0" width="5" height="11"/></clipPath><path d="M5.00 0.05L6.50 3.29L10.04 3.71L7.43 6.14L8.12 9.64L5.00 7.90L1.88 9.64L2.57 6.14L-0.04 3.71L3.50 3.29Z" fill="#ef9d00" clip-path="url(#hc)"/></g></svg></div>
<div class="r" style="left:1027px;top:624.0px;width:58px;height:11px;line-height:0"><svg width="58" height="11" viewBox="0 0 58 11" style="overflow:visible"><g transform="translate(0.2,0.3)"><path d="M5.00 0.05L6.50 3.29L10.04 3.71L7.43 6.14L8.12 9.64L5.00 7.90L1.88 9.64L2.57 6.14L-0.04 3.71L3.50 3.29Z" fill="#ef9d00"/></g><g transform="translate(12.2,0.3)"><path d="M5.00 0.05L6.50 3.29L10.04 3.71L7.43 6.14L8.12 9.64L5.00 7.90L1.88 9.64L2.57 6.14L-0.04 3.71L3.50 3.29Z" fill="#ef9d00"/></g><g transform="translate(24.2,0.3)"><path d="M5.00 0.40L6.44 3.47L9.80 3.89L7.33 6.21L7.97 9.54L5.00 7.90L2.03 9.54L2.67 6.21L0.20 3.89L3.56 3.47Z" fill="none" stroke="#ef9d00" stroke-width="0.8"/><clipPath id="hc"><rect x="0" y="0" width="5" height="11"/></clipPath><path d="M5.00 0.05L6.50 3.29L10.04 3.71L7.43 6.14L8.12 9.64L5.00 7.90L1.88 9.64L2.57 6.14L-0.04 3.71L3.50 3.29Z" fill="#ef9d00" clip-path="url(#hc)"/></g><g transform="translate(36.2,0.3)"><path d="M5.00 0.40L6.44 3.47L9.80 3.89L7.33 6.21L7.97 9.54L5.00 7.90L2.03 9.54L2.67 6.21L0.20 3.89L3.56 3.47Z" fill="none" stroke="#ef9d00" stroke-width="0.8" stroke-linejoin="miter"/></g><g transform="translate(48.2,0.3)"><path d="M5.00 0.40L6.44 3.47L9.80 3.89L7.33 6.21L7.97 9.54L5.00 7.90L2.03 9.54L2.67 6.21L0.20 3.89L3.56 3.47Z" fill="none" stroke="#ef9d00" stroke-width="0.8" stroke-linejoin="miter"/></g></svg></div>
<div class="t" style="left:939.5px;width:400px;text-align:center;top:624px;font-size:12px;color:#5c5c5c;font-weight:normal;">3001</div>
<div class="t" style="left:1019.5px;width:400px;text-align:center;top:624px;font-size:12px;color:#5c5c5c;font-weight:normal;">16</div>
<div class="t" style="left:1099.5px;width:400px;text-align:center;top:624px;font-size:12px;color:#5c5c5c;font-weight:normal;">0.53%</div>
<div class="r" style="left:37px;top:711.0px;width:13px;height:13px;border:1px solid #767676;border-radius:2px;box-sizing:border-box;background:#fff"></div>
<div class="r" style="left:115.0px;top:712.0px;width:15px;height:15px"><svg width="15" height="15" viewBox="0 0 15 15"><path d="M0.7 0.7H6.8L13.9 7.8L7.8 13.9L0.7 6.8Z" fill="none" stroke="#b8d4fc" stroke-width="1"/><circle cx="4.1" cy="4.1" r="1.4" fill="#4a7cc4"/></svg></div>
<div class="t" style="left:8.0px;width:400px;text-align:center;top:677.5px;font-size:12px;color:#555;font-weight:normal;">[快连电脑版下</div>
<div class="t" style="left:8.0px;width:400px;text-align:center;top:712.5px;font-size:12px;color:#555;font-weight:normal;">载]</div>
<div class="t" style="left:8.0px;width:400px;text-align:center;top:748.5px;font-size:12px;color:#555;font-weight:normal;"><svg width="10.5" height="10.5" viewBox="0 0 12 12" style="vertical-align:-1px;margin-left:0px;position:relative;top:0px"><circle cx="6" cy="6" r="6" fill="#555"/><path d="M4.1 4.8C4.1 3.5 5 2.7 6 2.7C7.1 2.7 7.9 3.5 7.9 4.5C7.9 5.8 6.5 6 6.5 7.6" fill="none" stroke="#fff" stroke-width="1.4"/><rect x="5.6" y="8.4" width="1.8" height="1.8" fill="#fff"/></svg></div>
<div class="t" style="left:94.5px;width:400px;text-align:center;top:714px;font-size:12px;color:#5c5c5c;font-weight:normal;letter-spacing:0.25px">58228274848</div>
<div class="t" style="left:181.0px;width:400px;text-align:center;top:714px;font-size:12px;color:#4f7cba;font-weight:normal;">kl</div>
<div class="t" style="left:267.5px;width:400px;text-align:center;top:713.5px;font-size:12px;color:#4f7cba;font-weight:normal;">优化阶段</div>
<div class="t" style="left:354.0px;width:400px;text-align:center;top:713.5px;font-size:12px;color:#555;font-weight:normal;">启用</div>
<div class="t" style="left:440.5px;width:400px;text-align:center;top:713.5px;font-size:12px;color:#555;font-weight:normal;">有效</div>
<div class="t" style="left:527.0px;width:400px;text-align:center;top:713.5px;font-size:12px;color:#555;font-weight:normal;">有效</div>
<div class="t" style="left:605.5px;width:400px;text-align:center;top:714px;font-size:12px;color:#5c5c5c;font-weight:normal;">12.68</div>
<div class="t" style="left:683.5px;width:400px;text-align:center;top:713.5px;font-size:12px;color:#555;font-weight:normal;">-</div>
<div class="r" style="left:941px;top:714.5px;width:58px;height:11px;line-height:0"><svg width="58" height="11" viewBox="0 0 58 11" style="overflow:visible"><g transform="translate(0.2,0.3)"><path d="M5.00 0.05L6.50 3.29L10.04 3.71L7.43 6.14L8.12 9.64L5.00 7.90L1.88 9.64L2.57 6.14L-0.04 3.71L3.50 3.29Z" fill="#ef9d00"/></g><g transform="translate(12.2,0.3)"><path d="M5.00 0.05L6.50 3.29L10.04 3.71L7.43 6.14L8.12 9.64L5.00 7.90L1.88 9.64L2.57 6.14L-0.04 3.71L3.50 3.29Z" fill="#ef9d00"/></g><g transform="translate(24.2,0.3)"><path d="M5.00 0.05L6.50 3.29L10.04 3.71L7.43 6.14L8.12 9.64L5.00 7.90L1.88 9.64L2.57 6.14L-0.04 3.71L3.50 3.29Z" fill="#ef9d00"/></g><g transform="translate(36.2,0.3)"><path d="M5.00 0.05L6.50 3.29L10.04 3.71L7.43 6.14L8.12 9.64L5.00 7.90L1.88 9.64L2.57 6.14L-0.04 3.71L3.50 3.29Z" fill="#ef9d00"/></g><g transform="translate(48.2,0.3)"><path d="M5.00 0.40L6.44 3.47L9.80 3.89L7.33 6.21L7.97 9.54L5.00 7.90L2.03 9.54L2.67 6.21L0.20 3.89L3.56 3.47Z" fill="none" stroke="#ef9d00" stroke-width="0.8"/><clipPath id="hc"><rect x="0" y="0" width="5" height="11"/></clipPath><path d="M5.00 0.05L6.50 3.29L10.04 3.71L7.43 6.14L8.12 9.64L5.00 7.90L1.88 9.64L2.57 6.14L-0.04 3.71L3.50 3.29Z" fill="#ef9d00" clip-path="url(#hc)"/></g></svg></div>
<div class="r" style="left:1027px;top:714.5px;width:58px;height:11px;line-height:0"><svg width="58" height="11" viewBox="0 0 58 11" style="overflow:visible"><g transform="translate(0.2,0.3)"><path d="M5.00 0.05L6.50 3.29L10.04 3.71L7.43 6.14L8.12 9.64L5.00 7.90L1.88 9.64L2.57 6.14L-0.04 3.71L3.50 3.29Z" fill="#ef9d00"/></g><g transform="translate(12.2,0.3)"><path d="M5.00 0.05L6.50 3.29L10.04 3.71L7.43 6.14L8.12 9.64L5.00 7.90L1.88 9.64L2.57 6.14L-0.04 3.71L3.50 3.29Z" fill="#ef9d00"/></g><g transform="translate(24.2,0.3)"><path d="M5.00 0.40L6.44 3.47L9.80 3.89L7.33 6.21L7.97 9.54L5.00 7.90L2.03 9.54L2.67 6.21L0.20 3.89L3.56 3.47Z" fill="none" stroke="#ef9d00" stroke-width="0.8"/><clipPath id="hc"><rect x="0" y="0" width="5" height="11"/></clipPath><path d="M5.00 0.05L6.50 3.29L10.04 3.71L7.43 6.14L8.12 9.64L5.00 7.90L1.88 9.64L2.57 6.14L-0.04 3.71L3.50 3.29Z" fill="#ef9d00" clip-path="url(#hc)"/></g><g transform="translate(36.2,0.3)"><path d="M5.00 0.40L6.44 3.47L9.80 3.89L7.33 6.21L7.97 9.54L5.00 7.90L2.03 9.54L2.67 6.21L0.20 3.89L3.56 3.47Z" fill="none" stroke="#ef9d00" stroke-width="0.8" stroke-linejoin="miter"/></g><g transform="translate(48.2,0.3)"><path d="M5.00 0.40L6.44 3.47L9.80 3.89L7.33 6.21L7.97 9.54L5.00 7.90L2.03 9.54L2.67 6.21L0.20 3.89L3.56 3.47Z" fill="none" stroke="#ef9d00" stroke-width="0.8" stroke-linejoin="miter"/></g></svg></div>
<div class="t" style="left:939.5px;width:400px;text-align:center;top:714px;font-size:12px;color:#5c5c5c;font-weight:normal;">926</div>
<div class="t" style="left:1019.5px;width:400px;text-align:center;top:714px;font-size:12px;color:#5c5c5c;font-weight:normal;">0</div>
<div class="t" style="left:1099.5px;width:400px;text-align:center;top:714px;font-size:12px;color:#5c5c5c;font-weight:normal;">-</div>
</body></html>
